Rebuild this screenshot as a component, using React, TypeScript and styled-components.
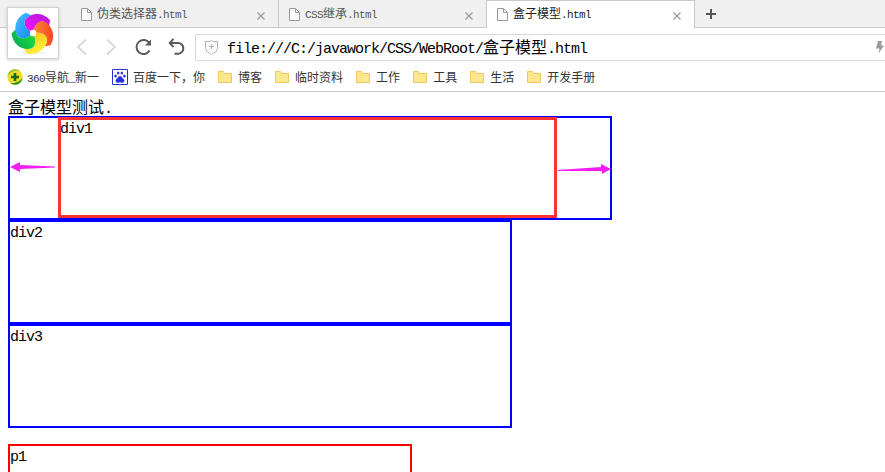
import React from "react";
import styled, { createGlobalStyle } from "styled-components";

const Global = createGlobalStyle`
  html, body, #root { height: 100%; }
  body { margin: 0; overflow: hidden; background: #fff; }
  * { box-sizing: border-box; }
  svg { display: block; flex: none; }
`;

const Line = styled.div<{ $size: number; $height: number; $color: string }>`
  height: ${(p) => p.$height}px;
  line-height: ${(p) => p.$size}px;
  font-family: "Noto Sans CJK SC", sans-serif;
  font-weight: 400;
  font-size: ${(p) => p.$size}px;
  color: ${(p) => p.$color};
  white-space: pre;
`;

/* Half-width glyphs: tightened so each advances half of the full-width size. */
const Half = styled.span<{ $size: number }>`
  font-family: "Liberation Mono", monospace;
  font-size: ${(p) => (p.$size === 16 ? 15 : 11)}px;
  letter-spacing: ${(p) => (p.$size === 16 ? -1 : -0.6)}px;
  line-height: 1px;
`;

interface TextProps {
  size?: number;
  height?: number;
  color?: string;
  children: string;
}

function Text({ size = 12, height = size, color = "#000", children }: TextProps) {
  const parts = children.match(/[\x20-\x7e]+|[^\x20-\x7e]+/g) ?? [];
  return (
    <Line $size={size} $height={height} $color={color}>
      {parts.map((part, i) =>
        /[\x20-\x7e]/.test(part) ? (
          <Half key={i} $size={size}>
            {part}
          </Half>
        ) : (
          part
        )
      )}
    </Line>
  );
}

const Window = styled.div`
  position: relative;
  height: 472px;
  display: flex;
  flex-direction: column;
  overflow: hidden;
`;

const TabStrip = styled.div`
  flex: none;
  height: 28px;
  display: flex;
  padding-left: 71px;
  background: #f0f0f0;
  box-shadow: inset 0 -1px #c9c9c9;
`;

const Tab = styled.div<{ $active?: boolean; $divided?: boolean }>`
  width: ${(p) => (p.$active ? 209 : p.$divided ? 208 : 207)}px;
  height: 28px;
  display: flex;
  align-items: center;
  gap: 5px;
  padding: ${(p) => (p.$active ? "0 13px 1px 10px" : "0 13px 0 10px")};
  border: solid #c9c9c9;
  border-width: ${(p) => (p.$active ? "1px 1px 0 1px" : p.$divided ? "0 1px 0 0" : "0")};
  background: ${(p) => (p.$active ? "#fff" : "transparent")};
`;

const Grow = styled.div`
  flex: 1;
`;

const CloseSlot = styled.div`
  padding-top: 3px;
`;

const NewTab = styled.div`
  padding: 9px 0 0 11px;
`;

const Toolbar = styled.div`
  flex: none;
  height: 34px;
  display: flex;
  padding: 6px 0 0 76px;
`;

const NavButtons = styled.div`
  width: 119px;
  height: 27px;
`;

const AddressBar = styled.div`
  flex: 1;
  height: 27px;
  display: flex;
  align-items: center;
  gap: 9px;
  padding: 0 1px 1px 9px;
  border: solid #d9d9d9;
  border-width: 1px 0 1px 1px;
  border-radius: 2px 0 0 2px;
`;

const Bookmarks = styled.div`
  flex: none;
  height: 30px;
  display: flex;
  align-items: center;
  gap: 13px;
  padding-left: 7px;
  border-bottom: 1px solid #c9c9c9;
`;

const Bookmark = styled.div<{ $gap?: number }>`
  display: flex;
  align-items: center;
  gap: ${(p) => p.$gap ?? 6}px;
`;

const Logo = styled.div`
  position: absolute;
  left: 7px;
  top: 7px;
  width: 52px;
  height: 52px;
  background: #fff;
  border: 1px solid #d2d2d2;
  box-shadow: 0 1px 3px rgba(0, 0, 0, 0.2);
`;

const Page = styled.main`
  flex: 1;
  padding: 6px 8px;
`;

const Box = styled.div<{ $w: number; $color?: string; $indent?: number; $top?: number }>`
  position: relative;
  width: ${(p) => p.$w}px;
  height: 104px;
  margin-top: ${(p) => p.$top ?? 0}px;
  padding-left: ${(p) => p.$indent ?? 0}px;
  border: 2px solid ${(p) => p.$color ?? "#00f"};
`;

const Highlight = styled.div`
  position: absolute;
  left: 48px;
  top: -1px;
  width: 499px;
  height: 101px;
  border: 3px solid #ff3333;
`;

const Arrow = styled.svg<{ $left: number }>`
  position: absolute;
  left: ${(p) => p.$left}px;
  top: 43px;
`;

const FileIcon = () => (
  <svg width="11" height="13" viewBox="0 0 11 13" fill="#fbfbfb" stroke="#999">
    <path d="M.5.5h6l4 4v8H.5zM6.5.5v4h4" />
  </svg>
);

const CloseIcon = () => (
  <svg width="8" height="8" viewBox="0 0 8 8" stroke="#999" strokeWidth="1.2">
    <path d="M.5.5l7 7M7.5.5l-7 7" />
  </svg>
);

const FolderIcon = () => (
  <svg width="14" height="12" viewBox="0 0 14 12">
    <path d="M.5.5h5l1 2h7v9H.5z" fill="#ffe790" stroke="#f0c75e" />
  </svg>
);

const NavIcons = () => (
  <svg width="119" height="27" viewBox="76 34 119 27" fill="none">
    <path d="M86 39.5l-8 7.5 8 7.5M107 39.5l8 7.5-8 7.5" stroke="#d8d8d8" strokeWidth="1.8" />
    <path d="M149.4 43.2a7 7 0 1 0 .2 7.4" stroke="#5a5a5a" strokeWidth="2" />
    <path d="M151 39.5v6h-6z" fill="#5a5a5a" />
    <path d="M170.5 43H178a5.3 5.3 0 0 1 0 10.7h-3.5" stroke="#5a5a5a" strokeWidth="2" />
    <path d="M173.5 38.8l-3.8 4.2 3.8 4" stroke="#5a5a5a" strokeWidth="1.9" />
  </svg>
);

const ShieldIcon = () => (
  <svg width="13" height="15" viewBox="0 0 13 15" fill="none" stroke="#b0b0b0">
    <path d="M.5 1.5h4l2-1 2 1h4v7q0 3-6 6-6-3-6-6z" />
    <path d="M4 6.500h5M6.500 4v5" />
  </svg>
);

const BoltIcon = () => (
  <svg width="8" height="13" viewBox="0 0 8 13">
    <path d="M2 0h4L5 4.500h3L2.500 12.500l1-5H0z" fill="#999" />
  </svg>
);

const SafeIcon = () => (
  <svg width="16" height="16" viewBox="0 0 16 16">
    <circle cx="8" cy="8" r="7.700" fill="#f2dc28" />
    <path d="M.5 7A7.700 7.700 0 0 1 13 2Q5 1 .5 7z" fill="#8cc63a" />
    <path d="M15.500 9A7.700 7.700 0 0 1 3 14q8 1 12.500-5z" fill="#299622" />
    <path d="M4 8h8M8 4v8" stroke="#126b15" strokeWidth="2.600" />
  </svg>
);

const PawIcon = () => (
  <svg width="16" height="16" viewBox="0 0 16 16" fill="#2932e1">
    <path d="M.5.5h15v15H.5z" fill="#fff" stroke="#2932e1" />
    <ellipse cx="3.600" cy="7" rx="1.300" ry="1.600" />
    <ellipse cx="6.200" cy="4" rx="1.200" ry="1.600" />
    <ellipse cx="9.800" cy="4" rx="1.200" ry="1.600" />
    <ellipse cx="12.400" cy="7" rx="1.300" ry="1.600" />
    <path d="M8 7c1.500 0 2 1.800 3.500 3.100 2 1.900.3 3.900-1.400 3.700-1.500-.3-2.700-.3-4.200 0-1.700.2-3.400-1.800-1.400-3.700C6 8.800 6.500 7 8 7z" />
  </svg>
);

const petals = [
  { id: "magenta", from: "#f714f7", to: "#c016e0" },
  { id: "orange", from: "#ff8a3c", to: "#f5481f" },
  { id: "yellow", from: "#ffc414", to: "#fff23c" },
  { id: "green", from: "#1fe03c", to: "#06b34e" },
  { id: "blue", from: "#138cf3", to: "#3fb4ff" },
];

const PinwheelIcon = () => (
  <svg width="50" height="50" viewBox="-25 -25 50 50">
    <defs>
      {petals.map(({ id, from, to }) => (
        <linearGradient key={id} id={id} x1="0.2" y1="1" x2="0.6" y2="0">
          <stop offset="0" stopColor={from} />
          <stop offset="1" stopColor={to} />
        </linearGradient>
      ))}
    </defs>
    <ellipse cy="20" rx="13" ry="1.5" fill="#f1f1f1" />
    {petals.map(({ id }, i) => (
      <path
        key={id}
        transform={`rotate(${i * 72})`}
        d="M0 0C-6-3-10-8-8-13C-3-20 9-22 17-13L16.3-7.2C14.6-9 12.5-10.8 9.9-11.6C4.5-12 1-6.6 0 0z"
        fill={`url(#${id})`}
      />
    ))}
    <circle r="3.2" fill="#fff" />
  </svg>
);

const tabs = ["伪类选择器.html", "CSS继承.html", "盒子模型.html"];
const folders = ["博客", "临时资料", "工作", "工具", "生活", "开发手册"];

export default function App() {
  return (
    <Window>
      <Global />
      <TabStrip>
        {tabs.map((title, i) => (
          <Tab key={title} $active={i === 2} $divided={i === 0}>
            <FileIcon />
            <Text height={14} color={i === 2 ? "#222" : "#555"}>
              {title}
            </Text>
            <Grow />
            <CloseSlot>
              <CloseIcon />
            </CloseSlot>
          </Tab>
        ))}
        <NewTab>
          <svg width="10" height="10" viewBox="0 0 10 10" stroke="#555" strokeWidth="2">
            <path d="M0 5h10M5 0v10" />
          </svg>
        </NewTab>
      </TabStrip>
      <Toolbar>
        <NavButtons>
          <NavIcons />
        </NavButtons>
        <AddressBar>
          <ShieldIcon />
          <Text size={16} height={18}>
            file:///C:/javawork/CSS/WebRoot/盒子模型.html
          </Text>
          <Grow />
          <BoltIcon />
        </AddressBar>
      </Toolbar>
      <Bookmarks>
        <Bookmark $gap={4}>
          <SafeIcon />
          <Text color="#333">360导航_新一</Text>
        </Bookmark>
        <Bookmark $gap={5}>
          <PawIcon />
          <Text color="#333">百度一下，你</Text>
        </Bookmark>
        {folders.map((name) => (
          <Bookmark key={name}>
            <FolderIcon />
            <Text color="#333">{name}</Text>
          </Bookmark>
        ))}
      </Bookmarks>
      <Logo>
        <PinwheelIcon />
      </Logo>
      <Page>
        <Text size={16} height={18}>
          盒子模型测试.
        </Text>
        <Box $w={604} $indent={50}>
          <Text size={16}>div1</Text>
          <Highlight />
          <Arrow $left={0} width="47" height="12" viewBox="0 0 47 12" fill="#f51cf5">
            <path d="M0 6L10 1V4L45 5.5V6.5L10 8v3z" />
          </Arrow>
          <Arrow $left={548} width="53" height="14" viewBox="0 0 53 14" fill="#f51cf5">
            <path d="M0 9L43 6V3L53 8L44 13V10L0 10z" />
          </Arrow>
        </Box>
        <Box $w={504}>
          <Text size={16}>div2</Text>
        </Box>
        <Box $w={504}>
          <Text size={16}>div3</Text>
        </Box>
        <Box $w={404} $color="#f00" $top={16}>
          <Text size={16}>p1</Text>
        </Box>
      </Page>
    </Window>
  );
}
